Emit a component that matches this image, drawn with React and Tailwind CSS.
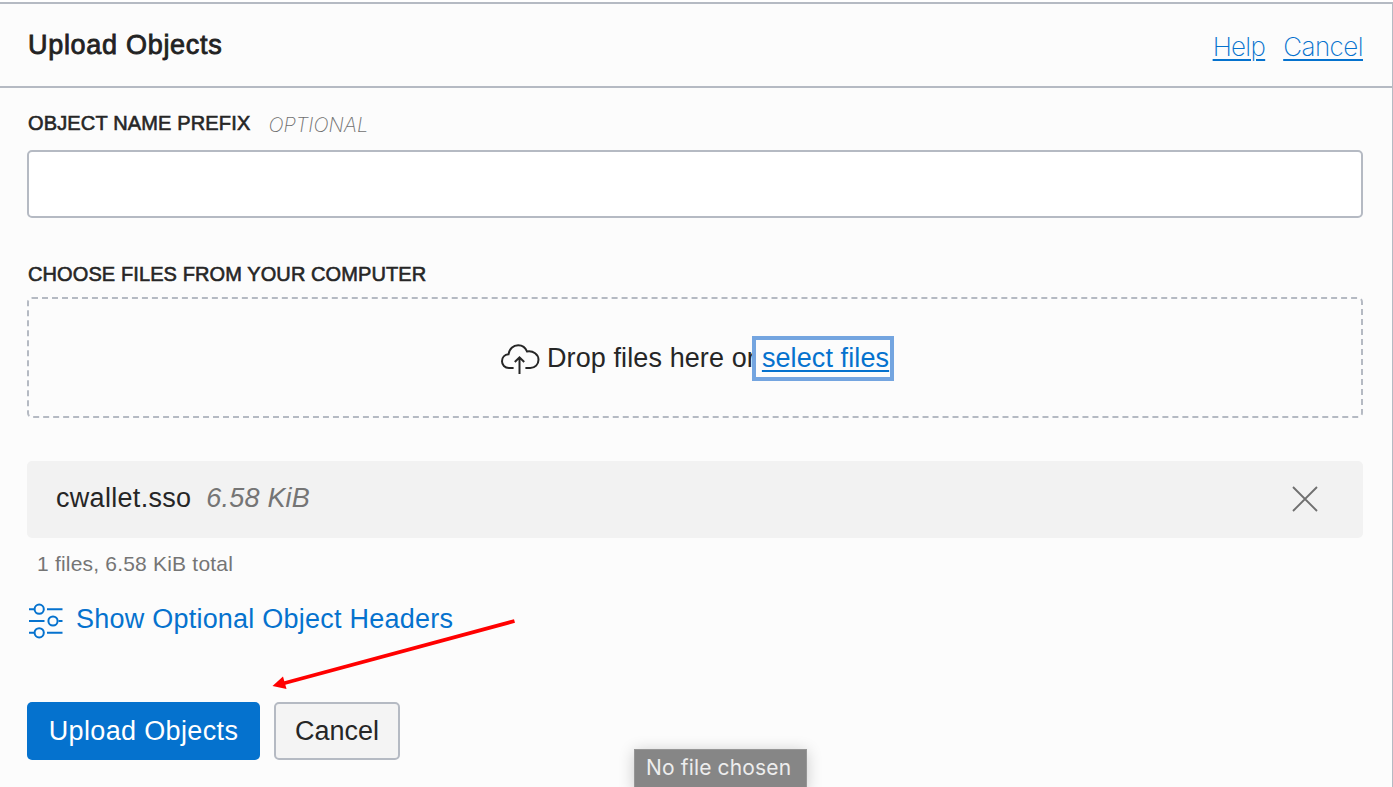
function CloudUploadIcon() {
  return (
    <svg className="h-[32px] w-[40px] shrink-0" viewBox="0 0 40 32" fill="none" stroke="#262626" strokeWidth="2">
      <path d="M13.600 25H8.900C4.800 25 2 22 2 18.300c0-3.800 2.700-6.600 6.500-7C9.200 6 13.200 2.200 18.200 2.200c4.200 0 7.400 2.500 8.800 6.300 6.300-1 11.500 3 11.500 8.300 0 4.600-3.500 8.200-8.200 8.200h-4.900" />
      <path d="M19.500 31V14.500M14.800 19l4.700-4.700 4.700 4.700" />
    </svg>
  );
}

function SlidersIcon() {
  return (
    <svg className="mt-px h-[36px] w-[36px] shrink-0" viewBox="0 0 36 36" fill="none" stroke="#0572ce" strokeWidth="2">
      <path d="M2 6.200h5M20 6.200h15.500M2 18h15.500M31.500 18h4M2 29.800h5M20 29.800h15.500" />
      <circle cx="12.200" cy="6.200" r="4.600" />
      <circle cx="26" cy="18" r="4.600" />
      <circle cx="12.200" cy="29.800" r="4.600" />
    </svg>
  );
}

function CloseIcon() {
  return (
    <svg className="h-[26px] w-[26px]" viewBox="0 0 26 26" fill="none" stroke="#707070" strokeWidth="1.900">
      <path d="M1 1l24 24M25 1L1 25" />
    </svg>
  );
}

function Header() {
  return (
    <header className="flex h-[86px] items-start justify-between border-y-2 border-[#b5bac3] pr-[29px] pl-[28px]">
      <h1 className="mt-[25px] text-[27px] leading-[32px] tracking-[0.7px] text-[#222] [-webkit-text-stroke:0.8px_#222]">
        Upload Objects
      </h1>
      <nav className="mt-[27px] flex gap-[18px] font-['Inter',sans-serif] text-[26px] leading-[32px] font-extralight text-[#0572ce]">
        <a className="tracking-[-0.7px] underline decoration-2 underline-offset-[3px]">Help</a>
        <a className="tracking-[-0.550px] underline decoration-2 underline-offset-[3px]">Cancel</a>
      </nav>
    </header>
  );
}

export default function App() {
  return (
    <div className="relative h-[787px] w-[1393px] overflow-hidden bg-white pt-[2px] font-['Liberation_Sans',Arial,sans-serif]">
      <div className="h-[785px] border-r border-[#b5bac3] bg-[#fcfcfc]">
        <Header />
        <main className="flex flex-col pr-[29px] pl-[27px] text-[27px] text-[#262626]">
          <label className="mt-[23px] flex h-[24px] items-center pl-px text-[20px] leading-[24px]">
            <span className="tracking-[0.15px] [-webkit-text-stroke:0.600px_#262626]">OBJECT NAME PREFIX</span>
            <span className="mt-[3px] ml-[18px] font-['Inter',sans-serif] font-extralight tracking-[0px] text-[#707070] italic">
              OPTIONAL
            </span>
          </label>
          <input className="mt-[15px] h-[68px] rounded-[5px] border-2 border-[#b5bac3] bg-white" />

          <h2 className="mt-[44px] h-[24px] pl-px text-[20px] leading-[24px] tracking-[0.1px] [-webkit-text-stroke:0.600px_#262626]">
            CHOOSE FILES FROM YOUR COMPUTER
          </h2>
          <div className="mt-[11px] flex h-[121px] items-center rounded-[5px] border-2 border-dashed border-[#b5bac3] pt-[2px] pl-[471px]">
            <CloudUploadIcon />
            <span className="ml-[7px] tracking-[0.1px] whitespace-nowrap">Drop files here or</span>
            <a className="relative -ml-[4px] flex h-[45px] w-[142px] items-center border-4 border-[#74a5e0] bg-[#fcfcfc] pl-[6px] tracking-[0.1px] whitespace-nowrap text-[#0572ce]">
              <span className="underline decoration-2 underline-offset-[3px]">select files</span>
            </a>
          </div>

          <div className="mt-[43px] flex h-[77px] items-center rounded-[5px] bg-[#f2f2f2] pr-[45px] pl-[29px]">
            <span className="-mt-[2px] tracking-[0.3px]">cwallet.sso</span>
            <span className="-mt-[2px] ml-[15px] tracking-[0.2px] text-[#757575] italic">6.58 KiB</span>
            <button className="-mt-px ml-auto">
              <CloseIcon />
            </button>
          </div>
          <p className="mt-[14px] pl-[10px] text-[21px] leading-[24px] tracking-[0.2px] text-[#757575]">
            1 files, 6.58 KiB total
          </p>
          <a className="mt-[26px] flex h-[36px] items-center text-[#0572ce]">
            <SlidersIcon />
            <span className="-mt-[2px] ml-[13px] tracking-[0.230px]">Show Optional Object Headers</span>
          </a>

          <div className="mt-[64px] flex gap-[14px]">
            <button className="h-[58px] w-[233px] rounded-[5px] bg-[#0572ce] tracking-[0.35px] text-white">
              Upload Objects
            </button>
            <button className="h-[58px] w-[126px] rounded-[5px] border-2 border-[#b5bac3] bg-[#f4f4f4]">
              Cancel
            </button>
          </div>
        </main>
      </div>

      <svg className="absolute top-[610px] left-[265px] h-[90px] w-[260px]" viewBox="265 610 260 90">
        <path d="M514.500 621L283 683.500" stroke="#f00" strokeWidth="3.800" />
        <path d="M272.500 686l10.500-9.500 3.500 12.500z" fill="#f00" />
      </svg>

      <div className="absolute top-[749px] left-[634px] flex h-[42px] w-[173px] border border-[#969696] bg-[#868686] pt-[4px] pl-[11px] font-['Inter',sans-serif] text-[21px] leading-[28px] tracking-[0.15px] text-[#ededed] shadow-[0_2px_16px_rgba(0,0,0,0.2)]">
        No file chosen
      </div>
    </div>
  );
}
